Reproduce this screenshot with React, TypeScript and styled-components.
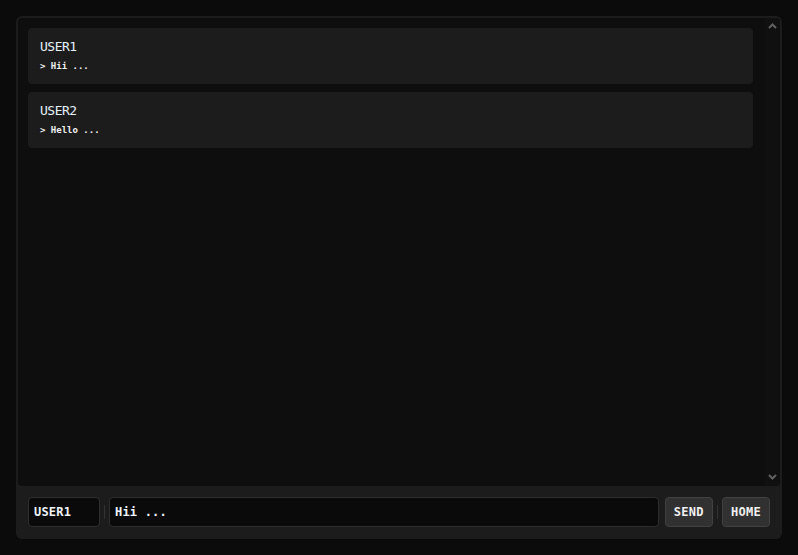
import styled, { createGlobalStyle } from "styled-components";

const GlobalStyle = createGlobalStyle`
  html, body {
    margin: 0;
    padding: 0;
    background-color: #0b0b0b;
    font-family: "DejaVu Sans Mono", "Liberation Mono", monospace;
    color: #eaeaea;
  }
  * {
    box-sizing: border-box;
  }
`;

const Page = styled.div`
  height: 555px;
  padding: 16px;
`;

const ChatBox = styled.div`
  display: flex;
  flex-direction: column;
  width: 766px;
  height: 523px;
  padding: 2px;
  background-color: #1c1c1c;
  border-radius: 6px;
`;

const ChatArea = styled.div`
  flex: 1;
  display: flex;
  min-height: 0;
  background-color: #0e0e0e;
  border-radius: 4px;
  overflow: hidden;
`;

const MessageList = styled.div`
  flex: 1;
  display: flex;
  flex-direction: column;
  gap: 8px;
  padding: 10px 12px 10px 10px;
`;

const ScrollTrack = styled.div`
  width: 15px;
  display: flex;
  flex-direction: column;
  justify-content: space-between;
  align-items: center;
  padding: 5px 0 6px 0;
  background-color: #101010;
`;

const MessageCard = styled.div`
  padding: 10px 12px;
  background-color: #1c1c1c;
  border-radius: 4px;
`;

const Author = styled.div`
  font-size: 13px;
  letter-spacing: -0.5px;
  line-height: 18px;
  color: #e4f0fb;
`;

const Text = styled.div`
  margin-top: 2px;
  font-size: 9px;
  font-weight: bold;
  line-height: 16px;
  color: #f2f2f2;
`;

const Toolbar = styled.div`
  display: flex;
  align-items: center;
  gap: 4px;
  padding: 11px 10px 10px 10px;
`;

const Field = styled.input<{ $width?: number }>`
  height: 30px;
  ${(p) => (p.$width ? `width: ${p.$width}px;` : "flex: 1; min-width: 0;")}
  padding: 0 5px;
  background-color: #0a0a0a;
  border: 1px solid #2e2e2e;
  border-radius: 4px;
  color: #eef4fa;
  font-family: inherit;
  font-size: 12px;
  font-weight: bold;
  letter-spacing: 0.2px;
  outline: none;
`;

const Divider = styled.span`
  width: 1px;
  height: 14px;
  background-color: #333;
`;

const Button = styled.button<{ $push?: boolean }>`
  height: 30px;
  padding: 0 8px;
  margin-left: ${(p) => (p.$push ? "2px" : "0")};
  background-color: #313131;
  border: 1px solid #414141;
  border-radius: 4px;
  color: #f0f0f0;
  font-family: inherit;
  font-size: 12px;
  font-weight: bold;
  letter-spacing: 0.3px;
  cursor: pointer;
`;

const Chevron = ({ down }: { down?: boolean }) => (
  <svg width="9" height="6" viewBox="0 0 9 6">
    <path
      d={down ? "M1 1 L4.5 4.5 L8 1" : "M1 5 L4.5 1.5 L8 5"}
      fill="none"
      stroke="#606060"
      strokeWidth="2"
    />
  </svg>
);

const messages = [
  { user: "USER1", text: "> Hii ..." },
  { user: "USER2", text: "> Hello ..." },
];

export default function App() {
  return (
    <>
      <GlobalStyle />
      <Page>
        <ChatBox>
          <ChatArea>
            <MessageList>
              {messages.map((m) => (
                <MessageCard key={m.user}>
                  <Author>{m.user}</Author>
                  <Text>{m.text}</Text>
                </MessageCard>
              ))}
            </MessageList>
            <ScrollTrack>
              <Chevron />
              <Chevron down />
            </ScrollTrack>
          </ChatArea>
          <Toolbar>
            <Field $width={72} defaultValue="USER1" />
            <Divider />
            <Field defaultValue="Hii ..." />
            <Button $push>SEND</Button>
            <Divider />
            <Button>HOME</Button>
          </Toolbar>
        </ChatBox>
      </Page>
    </>
  );
}
